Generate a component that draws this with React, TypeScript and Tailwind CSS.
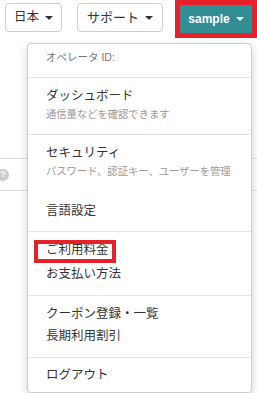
import React from "react";

function Caret({ color = "#333" }: { color?: string }) {
  return (
    <svg width="8" height="4" viewBox="0 0 8 4" className="ml-[6px]">
      <path d="M0 0h8L4 4z" fill={color} />
    </svg>
  );
}

function Group({ children, className = "" }: { children: React.ReactNode; className?: string }) {
  return <div className={`border-b border-[#e5e5e5] px-[18px] ${className}`}>{children}</div>;
}

function Title({ children, className = "" }: { children: React.ReactNode; className?: string }) {
  return <div className={`h-[20px] text-[12.5px] leading-[20px] text-[#333] ${className}`}>{children}</div>;
}

function Sub({ children }: { children: React.ReactNode }) {
  return <div className="h-[17px] text-[10.3px] leading-[17px] text-[#999] whitespace-nowrap">{children}</div>;
}

export default function App() {
  return (
    <div
      className="relative w-[257px] h-[393px] overflow-hidden bg-white"
      style={{ fontFamily: '"Liberation Sans", "Noto Sans CJK JP", sans-serif' }}
    >
      {/* top nav buttons */}
      <div className="flex items-start h-[38px]">
        <button className="ml-[5px] mt-[3px] flex h-[29px] w-[57px] items-center justify-center rounded-[4px] border border-[#ccc] bg-white text-[12.5px] text-[#333]">
          日本
          <Caret />
        </button>
        <button className="ml-[15px] mt-[3px] flex h-[29px] w-[86px] items-center justify-center rounded-[4px] border border-[#ccc] bg-white text-[13px] text-[#333]">
          サポート
          <Caret />
        </button>
        <div className="ml-[12px] h-[38px] w-[82px] border-[5px] border-[#e8202a] bg-white">
          <button className="flex h-full w-full items-center justify-center bg-[#328d94] text-[12px] font-bold text-white">
            sample
            <Caret color="#fff" />
          </button>
        </div>
      </div>

      {/* page content behind the menu */}
      <div className="mt-[120px] flex h-[33px] items-center border-y border-[#ddd]">
        <div className="-ml-[3px] flex h-[12px] w-[12px] items-center justify-center rounded-full bg-[#ccc] text-[9px] font-bold leading-none text-white">
          ?
        </div>
      </div>

      {/* dropdown menu */}
      <div className="absolute left-[27px] top-[43px] w-[225px] rounded-[4px] border border-[#ccc] bg-white shadow-[0_4px_10px_rgba(0,0,0,0.18)]">
        <Group className="pt-[5px] pb-[11px]">
          <div className="h-[17px] text-[10.5px] leading-[17px] text-[#777]">オペレータ ID:</div>
        </Group>
        <Group className="pt-[8px] pb-[11px]">
          <Title>ダッシュボード</Title>
          <Sub>通信量などを確認できます</Sub>
        </Group>
        <Group className="pt-[8px] pb-[10px]">
          <Title>セキュリティ</Title>
          <Sub>パスワード、認証キー、ユーザーを管理</Sub>
          <Title className="mt-[21px]">言語設定</Title>
        </Group>
        <Group className="pt-[8px] pb-[11px]">
          <Title>
            <span className="relative inline-block">
              ご利用料金
              <span className="absolute -left-[12px] -right-[7px] top-0 -bottom-[3px] border-[4px] border-[#e8202a]" />
            </span>
          </Title>
          <Title className="mt-[4px]">お支払い方法</Title>
        </Group>
        <Group className="pt-[8px] pb-[11px]">
          <Title>クーポン登録・一覧</Title>
          <Title className="mt-[2px]">長期利用割引</Title>
        </Group>
        <div className="px-[18px] pt-[7px] pb-[7px]">
          <Title>ログアウト</Title>
        </div>
      </div>
    </div>
  );
}
